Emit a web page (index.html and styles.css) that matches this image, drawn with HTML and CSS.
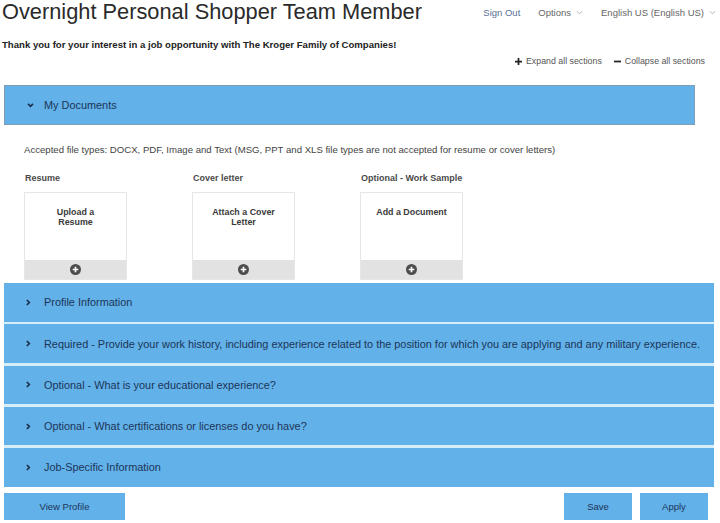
FILE: index.html
```html
<!DOCTYPE html>
<html>
<head>
<meta charset="utf-8">
<link rel="stylesheet" href="styles.css">
</head>
<body>
<header class="top">
  <h1 class="title">Overnight Personal Shopper Team Member</h1>
  <nav class="nav">
    <a class="nav-link signout">Sign Out</a>
    <span class="nav-link">Options <svg class="caret" viewBox="0 0 8 5"><path d="M1 1l3 3 3-3" fill="none" stroke="#aaa" stroke-width="1"/></svg></span>
    <span class="nav-link">English US (English US) <svg class="caret" viewBox="0 0 8 5"><path d="M1 1l3 3 3-3" fill="none" stroke="#aaa" stroke-width="1"/></svg></span>
  </nav>
</header>
<p class="intro">Thank you for your interest in a job opportunity with The Kroger Family of Companies!</p>
<div class="tools">
  <span class="tool"><svg class="tool-ic" viewBox="0 0 8 8"><path d="M4 0v8M0 4h8" stroke="#222" stroke-width="2"/></svg>Expand all sections</span>
  <span class="tool"><svg class="tool-ic" viewBox="0 0 8 8"><path d="M0 4h8" stroke="#222" stroke-width="2"/></svg>Collapse all sections</span>
</div>

<section class="open">
  <div class="bar bar-open">
    <svg class="chev" viewBox="0 0 8 6"><path d="M1 1l3 3 3-3" fill="none" stroke="#1b2f4e" stroke-width="2"/></svg>
    <span>My Documents</span>
  </div>
  <div class="docs">
    <p class="accepted">Accepted file types: DOCX, PDF, Image and Text (MSG, PPT and XLS file types are not accepted for resume or cover letters)</p>
    <div class="cards">
      <div class="doc">
        <div class="doc-label">Resume</div>
        <div class="card">
          <div class="card-body">Upload a<br>Resume</div>
          <div class="card-foot"><svg class="plus" viewBox="0 0 12 12"><circle cx="6" cy="6" r="6" fill="#4d4d4d"/><path d="M6 3v6M3 6h6" stroke="#fff" stroke-width="1.8"/></svg></div>
        </div>
      </div>
      <div class="doc">
        <div class="doc-label">Cover letter</div>
        <div class="card">
          <div class="card-body">Attach a Cover<br>Letter</div>
          <div class="card-foot"><svg class="plus" viewBox="0 0 12 12"><circle cx="6" cy="6" r="6" fill="#4d4d4d"/><path d="M6 3v6M3 6h6" stroke="#fff" stroke-width="1.8"/></svg></div>
        </div>
      </div>
      <div class="doc">
        <div class="doc-label">Optional - Work Sample</div>
        <div class="card">
          <div class="card-body">Add a Document</div>
          <div class="card-foot"><svg class="plus" viewBox="0 0 12 12"><circle cx="6" cy="6" r="6" fill="#4d4d4d"/><path d="M6 3v6M3 6h6" stroke="#fff" stroke-width="1.8"/></svg></div>
        </div>
      </div>
    </div>
  </div>
</section>

<div class="sections">
  <div class="bar"><svg class="chev-r" viewBox="0 0 6 8"><path d="M1 1l3 3-3 3" fill="none" stroke="#1b2f4e" stroke-width="2"/></svg><span>Profile Information</span></div>
  <div class="bar"><svg class="chev-r" viewBox="0 0 6 8"><path d="M1 1l3 3-3 3" fill="none" stroke="#1b2f4e" stroke-width="2"/></svg><span>Required - Provide your work history, including experience related to the position for which you are applying and any military experience.</span></div>
  <div class="bar"><svg class="chev-r" viewBox="0 0 6 8"><path d="M1 1l3 3-3 3" fill="none" stroke="#1b2f4e" stroke-width="2"/></svg><span>Optional - What is your educational experience?</span></div>
  <div class="bar"><svg class="chev-r" viewBox="0 0 6 8"><path d="M1 1l3 3-3 3" fill="none" stroke="#1b2f4e" stroke-width="2"/></svg><span>Optional - What certifications or licenses do you have?</span></div>
  <div class="bar"><svg class="chev-r" viewBox="0 0 6 8"><path d="M1 1l3 3-3 3" fill="none" stroke="#1b2f4e" stroke-width="2"/></svg><span>Job-Specific Information</span></div>
</div>

<footer class="actions">
  <button class="btn btn-wide">View Profile</button>
  <div class="actions-right">
    <button class="btn">Save</button>
    <button class="btn">Apply</button>
  </div>
</footer>
</body>
</html>
```
FILE: styles.css
```css
* { box-sizing: border-box; }
html, body { margin: 0; padding: 0; background: #fff; }
body {
  font-family: "Liberation Sans", Arial, sans-serif;
  color: #333;
  width: 720px;
  height: 523px;
  overflow: hidden;
}
.top {
  display: flex;
  justify-content: space-between;
  align-items: flex-start;
  padding: 0 4px 0 2px;
  height: 34px;
}
.title {
  margin: 0;
  font-size: 21.8px;
  line-height: 24px;
  font-weight: normal;
  color: #2a2a2a;
}
.nav {
  display: flex;
  gap: 18px;
  padding-top: 7px;
  font-size: 9.5px;
  color: #666;
}
.nav-link { display: flex; align-items: center; gap: 5px; }
.signout { color: #5a6f99; }
.caret { width: 7px; height: 5px; }
.intro {
  margin: 6px 0 0 2px;
  font-size: 9.6px;
  font-weight: bold;
  color: #222;
  line-height: 10px;
}
.tools {
  display: flex;
  justify-content: flex-end;
  gap: 12px;
  padding-right: 15px;
  margin-top: 5px;
  font-size: 8.8px;
  color: #555;
  height: 12px;
  align-items: center;
}
.tool { display: flex; align-items: center; gap: 4px; }
.tool-ic { width: 7px; height: 7px; }
.open { margin-top: 18px; }
.bar {
  display: flex;
  align-items: center;
  background: #62b1e8;
  color: #1c3558;
  font-size: 10.9px;
  height: 38.5px;
  padding-left: 22px;
  gap: 13px;
}
.bar-open {
  margin: 0 25px 0 4px;
  height: 40px;
  border: 1px solid #7e9db6;
  padding-left: 22px;
  gap: 10px;
}
.chev { width: 7px; height: 5px; }
.chev-r { width: 5px; height: 7px; }
.docs { padding: 0 0 0 24px; }
.accepted {
  margin: 20px 0 0 0;
  font-size: 9.6px;
  color: #444;
  line-height: 10px;
}
.cards {
  display: flex;
  gap: 65px;
  margin-top: 18px;
}
.doc { width: 103px; }
.doc-label {
  font-size: 9px;
  color: #4a4a4a;
  font-weight: bold;
  line-height: 10px;
  margin-left: 1px;
}
.card {
  margin-top: 9px;
  height: 88px;
  border: 1px solid #e6e6e6;
  display: flex;
  flex-direction: column;
}
.card-body {
  flex: 1;
  text-align: center;
  font-size: 8.9px;
  color: #3a3a3a;
  padding-top: 14px;
  line-height: 10px;
  font-weight: bold;
}
.card-foot {
  height: 19px;
  background: #e2e2e2;
  display: flex;
  align-items: center;
  justify-content: center;
}
.plus { width: 11px; height: 11px; }
.sections {
  margin: 3px 6px 0 4px;
  display: flex;
  flex-direction: column;
  gap: 2.75px;
  background: #d6eef9;
}
.actions {
  display: flex;
  justify-content: space-between;
  margin-top: 6px;
  padding: 0 12px 0 4px;
}
.actions-right { display: flex; gap: 8px; }
.btn {
  border: 0;
  background: #62b1e8;
  color: #1c3558;
  font-family: "Liberation Sans", Arial, sans-serif;
  font-size: 9.5px;
  height: 27px;
  width: 68px;
  padding: 0;
}
.btn-wide { width: 121px; }
```
